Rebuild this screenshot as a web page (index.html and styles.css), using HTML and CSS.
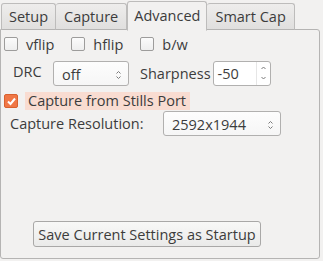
FILE: index.html
```html
<!DOCTYPE html>
<html lang="en">
<head>
    <meta charset="UTF-8">
    <title>Camera Settings</title>
    <link rel="stylesheet" href="styles.css">
</head>
<body>
    <div class="tabs">
        <div class="tab">Setup</div>
        <div class="tab">Capture</div>
        <div class="tab active">Advanced</div>
        <div class="tab">Smart Cap</div>
    </div>

    <div class="panel">
        <div class="row flips">
            <label class="check"><span class="box"></span>vflip</label>
            <label class="check"><span class="box"></span>hflip</label>
            <label class="check"><span class="box"></span>b/w</label>
        </div>

        <div class="row settings">
            <span class="label drc-label">DRC</span>
            <div class="combo drc">
                <span>off</span>
                <span class="arrows">
                    <svg width="5" height="10" viewBox="0 0 5 10"><path d="M0.5 3.5 L2.5 1.5 L4.5 3.5 M0.5 6.5 L2.5 8.5 L4.5 6.5" fill="none" stroke="#7a7a7a" stroke-width="1"/></svg>
                </span>
            </div>
            <span class="label sharp-label">Sharpness</span>
            <div class="spin">
                <span>-50</span>
                <span class="spin-arrows">
                    <svg width="5" height="18" viewBox="0 0 5 18"><path d="M0.5 5 L2.5 3 L4.5 5 M0.5 13 L2.5 15 L4.5 13" fill="none" stroke="#7a7a7a" stroke-width="1"/></svg>
                </span>
            </div>
        </div>

        <div class="row stills">
            <span class="box checked">
                <svg width="11" height="11" viewBox="0 0 11 11"><path d="M2 5.5 L4.5 8 L9 2.5" fill="none" stroke="#fff" stroke-width="2"/></svg>
            </span>
            <span class="stills-text">Capture from Stills Port</span>
        </div>

        <div class="row resolution">
            <span class="label res-label">Capture Resolution:</span>
            <div class="combo res">
                <span>2592x1944</span>
                <span class="arrows">
                    <svg width="5" height="10" viewBox="0 0 5 10"><path d="M0.5 3.5 L2.5 1.5 L4.5 3.5 M0.5 6.5 L2.5 8.5 L4.5 6.5" fill="none" stroke="#7a7a7a" stroke-width="1"/></svg>
                </span>
            </div>
        </div>

        <div class="row actions">
            <button class="save">Save Current Settings as Startup</button>
        </div>
    </div>
</body>
</html>
```

FILE: styles.css
```css
* {
    margin: 0;
    padding: 0;
    box-sizing: border-box;
}

body {
    font-family: 'Open Sans', 'DejaVu Sans', sans-serif;
    font-size: 14.5px;
    color: #3c3c3c;
    background: #f2f1f0;
    width: 323px;
    height: 261px;
    overflow: hidden;
}

/* Tab bar */
.tabs {
    display: flex;
    align-items: flex-end;
    height: 30px;
    padding-left: 1px;
    position: relative;
    z-index: 1;
}

.tab {
    height: 27px;
    padding: 0 8px;
    line-height: 25px;
    border: 1px solid #bdbcbb;
    border-bottom: 1px solid #b5b4b3;
    border-radius: 3px 3px 0 0;
    background: linear-gradient(#eeedec, #e0dfde);
}

.tab:first-child {
    padding: 0 7px;
}

.tab + .tab {
    border-left: none;
}

.tab.active {
    height: 30px;
    line-height: 27px;
    background: #f2f1f0;
    border-left: 1px solid #bdbcbb;
    border-bottom-color: #f2f1f0;
    margin-bottom: -1px;
    padding: 0 6px;
}

.tab.active + .tab {
    border-left: none;
}

/* Page */
.panel {
    width: 320px;
    height: 230px;
    margin-top: -1px;
    border: 1px solid #b5b4b3;
    border-radius: 0 3px 3px 3px;
    display: flex;
    flex-direction: column;
    padding: 4px 0 0 3px;
}

.row {
    display: flex;
    align-items: center;
}

.flips {
    height: 20px;
}

.check {
    display: flex;
    align-items: center;
    margin-right: 17px;
}

.box {
    display: inline-flex;
    align-items: center;
    justify-content: center;
    width: 14px;
    height: 14px;
    border: 1px solid #9d9c9b;
    border-radius: 2px;
    background: linear-gradient(#fbfbfb, #eeeeee);
    margin-right: 8px;
}

.box.checked {
    background: #f07746;
    border-color: #d9612f;
    margin-right: 7px;
}

.settings {
    margin-top: 6px;
    height: 26px;
}

.label {
    white-space: nowrap;
}

.drc-label {
    margin-left: 9px;
    width: 40px;
    margin-top: -4px;
}

.combo,
.spin {
    display: flex;
    align-items: center;
    justify-content: space-between;
    height: 25px;
    border: 1px solid #b1b0af;
    border-radius: 3px;
    background: linear-gradient(#fdfdfd, #f6f6f6);
    padding: 2px 7px 0 8px;
}

.drc {
    width: 76px;
}

.sharp-label {
    margin-left: 11px;
    margin-right: 2px;
}

.spin {
    width: 58px;
    background: #ffffff;
    padding: 0 0 0 4px;
}

.spin-arrows {
    display: flex;
    align-items: center;
    justify-content: center;
    width: 14px;
    height: 100%;
    border-left: 1px solid #e6e6e6;
}

.stills {
    margin-top: 6px;
    height: 18px;
}

.stills-text {
    background: #f9dcd1;
    padding: 0 2px 0 3px;
    height: 18px;
    line-height: 18px;
    width: 165px;
}

.resolution {
    margin-top: 1px;
    height: 25px;
}

.res-label {
    margin-left: 6px;
    width: 153px;
}

.res {
    width: 118px;
}

.actions {
    margin-top: auto;
    margin-bottom: 11px;
    padding-left: 29px;
}

.save {
    font-family: inherit;
    font-size: 14.5px;
    color: #3c3c3c;
    height: 26px;
    width: 228px;
    border: 1px solid #a9a8a7;
    border-radius: 3px;
    background: linear-gradient(#f8f8f7, #eaeae9);
}
```
